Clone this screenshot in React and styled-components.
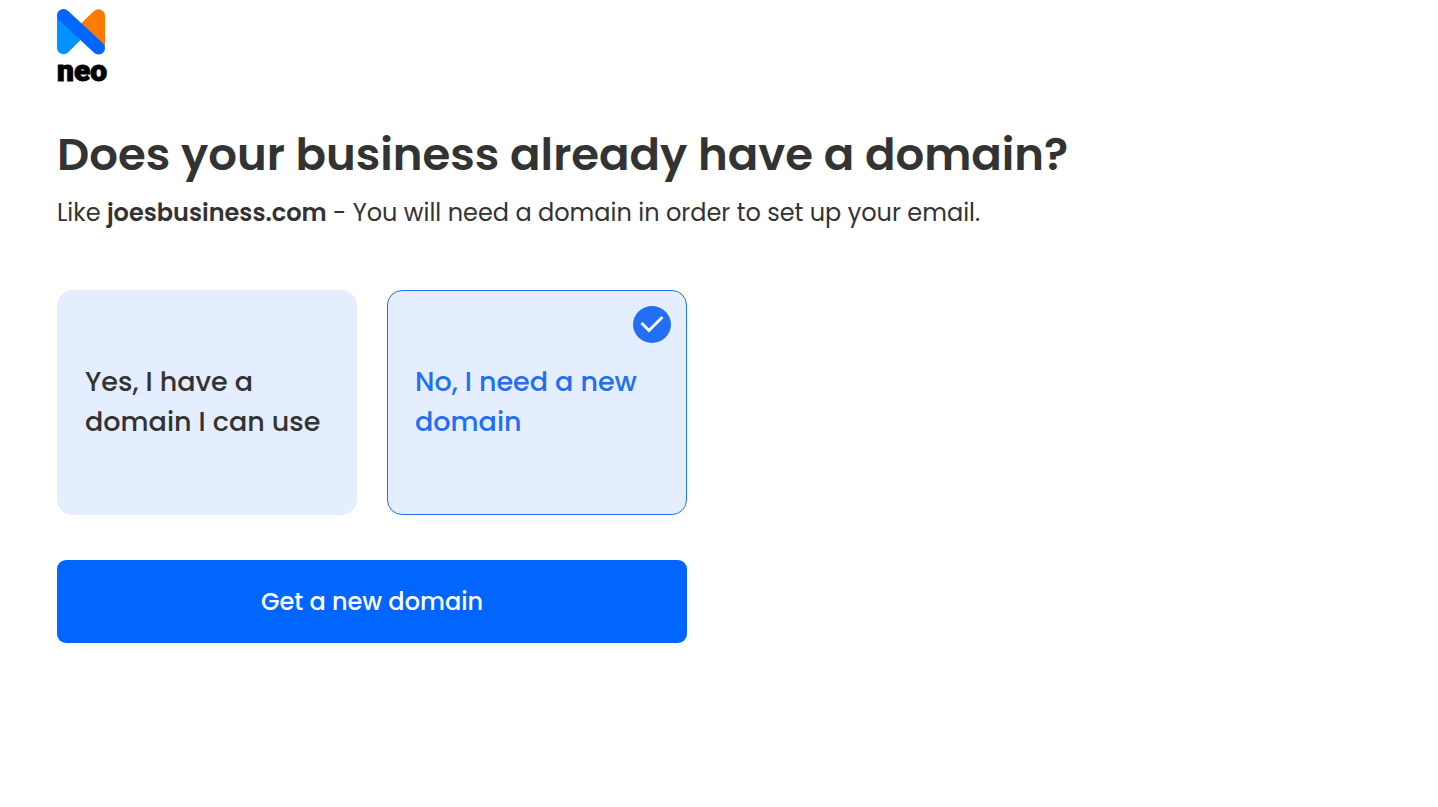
import { useState } from "react";
import styled, { createGlobalStyle } from "styled-components";

const options = [
  {
    value: "yes",
    label: "Yes, I have a domain I can use",
    action: "Use my domain",
  },
  {
    value: "no",
    label: "No, I need a new domain",
    action: "Get a new domain",
  },
];

const Logo = () => (
  <LogoLink href="/">
    <svg width="48" height="46" viewBox="0 0 48 46" aria-hidden="true">
      <path
        d="M0 7L24 30.500L11 43.500Q8 46 5 45Q0 43.500 0 38.500Z"
        fill="#0093ff"
      />
      <path
        d="M24 14.500L37 2Q40 -0.500 43 0.500Q48 2 48 7V39Z"
        fill="#ff7a00"
      />
      <path
        d="M6.500 6.500L41.500 39"
        stroke="#0066ff"
        strokeWidth="13"
        strokeLinecap="round"
      />
    </svg>
    <LogoText>neo</LogoText>
  </LogoLink>
);

const CheckIcon = () => (
  <CheckBadge width="38" height="38" viewBox="0 0 38 38" aria-hidden="true">
    <ellipse cx="19" cy="18.500" rx="19" ry="18.500" fill="#226ff4" />
    <path
      d="M8.500 17L16 24.500L29.500 11"
      fill="none"
      stroke="#fff"
      strokeWidth="3"
    />
  </CheckBadge>
);

export default function App() {
  const [answer, setAnswer] = useState("no");
  const selected = options.find((option) => option.value === answer);

  return (
    <>
      <GlobalStyle />
      <Page>
        <Logo />
        <Title id="question">Does your business already have a domain?</Title>
        <SubTitle>
          Like <strong>joesbusiness.com</strong> - You will need a domain in
          order to set up your email.
        </SubTitle>
        <Form onSubmit={(e) => e.preventDefault()}>
          <Options role="radiogroup" aria-labelledby="question">
            {options.map((option) => (
              <Option
                key={option.value}
                htmlFor={option.value}
                $selected={option.value === answer}
              >
                <Radio
                  id={option.value}
                  type="radio"
                  name="domain"
                  value={option.value}
                  checked={option.value === answer}
                  onChange={() => setAnswer(option.value)}
                />
                {option.label}
                {option.value === answer && <CheckIcon />}
              </Option>
            ))}
          </Options>
          <SubmitButton type="submit">{selected.action}</SubmitButton>
        </Form>
      </Page>
    </>
  );
}

const GlobalStyle = createGlobalStyle`
  * {
    box-sizing: border-box;
  }

  body {
    margin: 0;
    background: #fff;
    color: #333;
    font-family: Poppins, Inter, sans-serif;
  }
`;

const Page = styled.main`
  padding: 9px 57px 48px;
`;

const LogoLink = styled.a`
  display: inline-flex;
  flex-direction: column;
  color: #000;
  text-decoration: none;
`;

const LogoText = styled.span`
  font-family: Roboto, sans-serif;
  font-size: 30px;
  font-weight: 900;
  line-height: 32px;
  -webkit-text-stroke: 1px #000;
`;

const Title = styled.h1`
  margin: 32px 0 0;
  font-size: 45px;
  font-weight: 600;
  line-height: 72px;
`;

const SubTitle = styled.p`
  margin: 4px 0 0;
  font-size: 24px;
  line-height: 36px;

  strong {
    font-weight: 600;
  }
`;

const Form = styled.form`
  display: flex;
  flex-direction: column;
  gap: 45px;
  max-width: 630px;
  margin-top: 59px;
`;

const Options = styled.div`
  display: grid;
  grid-template-columns: repeat(auto-fit, minmax(240px, 1fr));
  gap: 30px;
`;

const Option = styled.label`
  position: relative;
  display: flex;
  align-items: center;
  min-height: 225px;
  padding: 0 27px 2px;
  border: 1px solid ${({ $selected }) => ($selected ? "#226ff4" : "#e5eeff")};
  border-radius: 15px;
  background: #e5eeff;
  color: ${({ $selected }) => ($selected ? "#226ff4" : "#333")};
  font-size: 27px;
  font-weight: 500;
  line-height: 40px;
  cursor: pointer;
`;

const Radio = styled.input`
  position: absolute;
  inset: 0;
  width: 100%;
  height: 100%;
  margin: 0;
  opacity: 0;
  cursor: pointer;
`;

const CheckBadge = styled.svg`
  position: absolute;
  top: 15px;
  right: 15px;
`;

const SubmitButton = styled.button`
  padding: 24px;
  border: 0;
  border-radius: 9px;
  background: #0066ff;
  color: #fff;
  font-family: inherit;
  font-size: 24px;
  font-weight: 500;
  line-height: 35px;
  cursor: pointer;
`;
